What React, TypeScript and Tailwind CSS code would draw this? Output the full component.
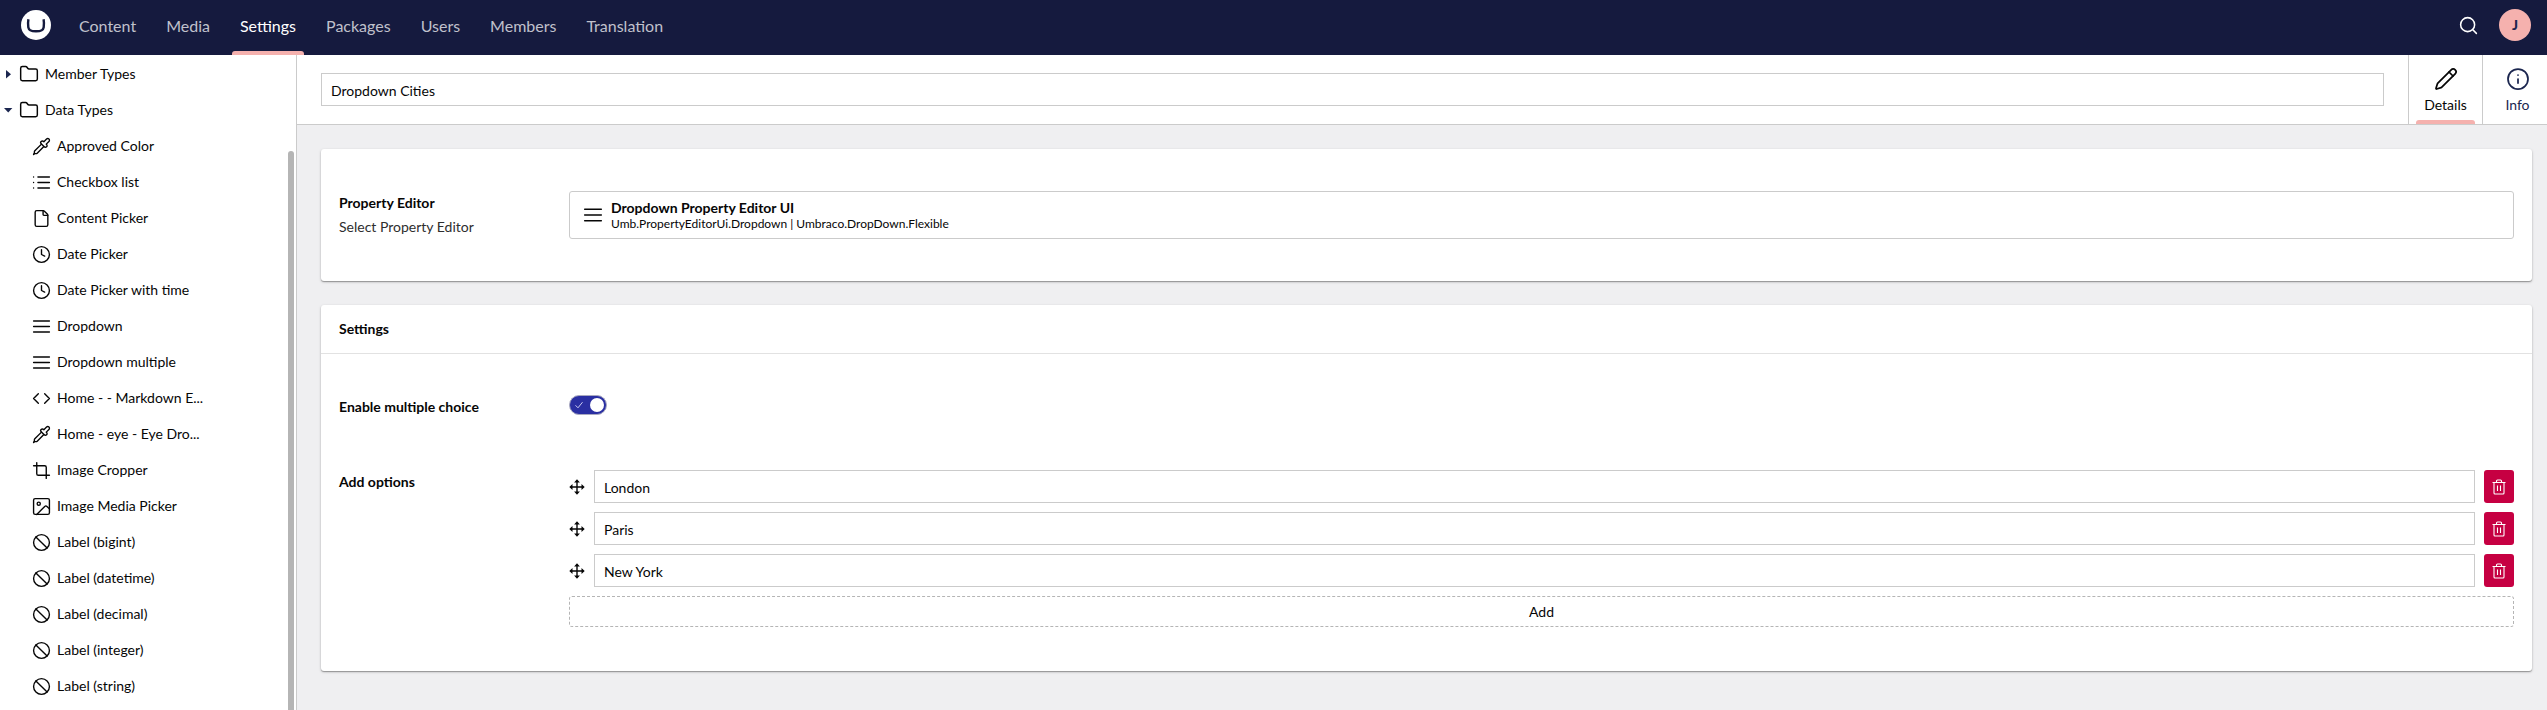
import { useState } from "react";
import type { ReactNode } from "react";
import { Ban, Clock, Crop, File, Folder, Info, Menu, Pencil, Pipette, Search } from "lucide-react";
import type { LucideIcon } from "lucide-react";

const sections = ["Content", "Media", "Settings", "Packages", "Users", "Members", "Translation"];

type DrawnIconProps = { size?: number; strokeWidth?: number };

function Drawn({ size = 19, strokeWidth = 2, children }: DrawnIconProps & { children: ReactNode }) {
  return (
    <svg
      width={size}
      height={size}
      viewBox="0 0 24 24"
      fill="none"
      stroke="currentColor"
      strokeWidth={strokeWidth}
      strokeLinecap="round"
      strokeLinejoin="round"
      aria-hidden="true"
    >
      {children}
    </svg>
  );
}

const CodeIcon = (props: DrawnIconProps) => (
  <Drawn {...props}>
    <path d="m16 18 6-6-6-6M8 6l-6 6 6 6" />
  </Drawn>
);

const PictureIcon = (props: DrawnIconProps) => (
  <Drawn {...props}>
    <rect x="2" y="2" width="20" height="20" rx="2" />
    <circle cx="8.5" cy="8.5" r="2" />
    <path d="m22 15-3.1-3.1a2 2 0 0 0-2.8 0L6 22" />
  </Drawn>
);

const LinesIcon = (props: DrawnIconProps) => (
  <Drawn {...props}>
    <path d="M2 5h20M2 12h20M2 19h20" />
  </Drawn>
);

const ListIcon = (props: DrawnIconProps) => (
  <Drawn {...props}>
    <path d="M7.5 5H22M7.5 12H22M7.5 19H22M2 5h.01M2 12h.01M2 19h.01" />
  </Drawn>
);

type TreeIcon = LucideIcon | typeof CodeIcon;

const dataTypes: { label: string; icon: TreeIcon }[] = [
  { label: "Approved Color", icon: Pipette },
  { label: "Checkbox list", icon: ListIcon },
  { label: "Content Picker", icon: File },
  { label: "Date Picker", icon: Clock },
  { label: "Date Picker with time", icon: Clock },
  { label: "Dropdown", icon: LinesIcon },
  { label: "Dropdown multiple", icon: LinesIcon },
  { label: "Home - - Markdown E...", icon: CodeIcon },
  { label: "Home - eye - Eye Dro...", icon: Pipette },
  { label: "Image Cropper", icon: Crop },
  { label: "Image Media Picker", icon: PictureIcon },
  { label: "Label (bigint)", icon: Ban },
  { label: "Label (datetime)", icon: Ban },
  { label: "Label (decimal)", icon: Ban },
  { label: "Label (integer)", icon: Ban },
  { label: "Label (string)", icon: Ban },
];

function Logo() {
  return (
    <svg width="30" height="30" viewBox="0 0 30 30" aria-hidden="true">
      <circle cx="15" cy="15" r="15" fill="#fff" />
      <path
        d="M7.4 9.3c-.5 3-.5 5.400-.1 8 .4 2.600 1.800 4 7.700 4s7.300-1.400 7.700-4c.4-2.600.4-5-.1-8"
        fill="none"
        stroke="#151a3e"
        strokeWidth="2.400"
      />
    </svg>
  );
}

function MoveIcon() {
  return (
    <svg width="16" height="16" viewBox="0 0 16 16" fill="currentColor" aria-hidden="true">
      <path d="M7.300 2h1.400v12H7.300z M2 7.300h12v1.400h-12z" />
      <path d="M8 .3 10.900 3.500H5.100z M8 15.700 5.100 12.500h5.800z M.3 8 3.500 5.100v5.800z M15.700 8l-3.200 2.900V5.100z" />
    </svg>
  );
}

function TrashIcon() {
  return (
    <svg
      width="16"
      height="16"
      viewBox="0 0 16 16"
      fill="none"
      stroke="currentColor"
      strokeWidth="1.1"
      strokeLinejoin="round"
      aria-hidden="true"
    >
      <path d="M1.500 3.500h13M5.500 3.500V2a1 1 0 0 1 1-1h3a1 1 0 0 1 1 1v1.500M3 3.500v10.500c0 .6.4 1 1 1h8c.6 0 1-.4 1-1V3.500M6.500 6.500v5.500M9.500 6.500v5.500" />
    </svg>
  );
}

function Property({ label, description, children }: { label: string; description?: string; children: ReactNode }) {
  return (
    <div className="flex gap-[30px] py-6">
      <div className="w-[200px] shrink-0 leading-6">
        <div className="font-bold">{label}</div>
        {description && <div className="text-[#2e2e2e]">{description}</div>}
      </div>
      <div className="min-w-0 flex-1">{children}</div>
    </div>
  );
}

const card = "rounded-[3px] bg-white shadow-[0_1px_3px_rgba(0,0,0,0.2),0_1px_1px_rgba(0,0,0,0.28)]";
const textBox = "h-[33px] min-w-0 flex-1 border border-[#cbcbcb] bg-white px-[9px] pt-[2px] outline-none";

export default function App() {
  const [name, setName] = useState("Dropdown Cities");
  const [multiple, setMultiple] = useState(true);
  const [options, setOptions] = useState(["London", "Paris", "New York"]);

  return (
    <div className="flex h-screen flex-col overflow-hidden bg-[#efeff1] font-[Lato,sans-serif] text-sm text-[#060606]">
      <header className="flex h-[55px] shrink-0 items-center bg-[#151a3e] pr-4 pl-[21px]">
        <a href="#home" aria-label="Home" className="mr-5 pb-[5px]">
          <Logo />
        </a>
        <nav className="flex flex-1 gap-[14px] self-stretch text-base">
          {sections.map((s) => (
            <a
              key={s}
              href={`#${s.toLowerCase()}`}
              className={`relative flex items-center px-2 pb-1 ${s === "Settings" ? "text-white" : "text-[#c0c1cc]"}`}
            >
              {s}
              {s === "Settings" && <span className="absolute inset-x-0 bottom-0 h-1 rounded-t-[3px] bg-[#f5b1ae]" />}
            </a>
          ))}
        </nav>
        <div className="flex items-center gap-5 pb-[5px]">
          <button type="button" aria-label="Search" className="text-white">
            <Search size={21} strokeWidth={1.75} />
          </button>
          <button type="button" className="size-8 rounded-full bg-[#f5b1ae] text-sm font-black text-[#1b264f]">
            J
          </button>
        </div>
      </header>

      <div className="flex min-h-0 flex-1">
        <aside className="relative w-[297px] shrink-0 overflow-hidden border-r border-[#cbcbcb] bg-white pt-px">
          <ul>
            <li>
              <a href="#member-types" className="flex h-9 items-center pl-1">
                <svg width="9" height="9" viewBox="0 0 9 9" className="mr-[6px]" aria-hidden="true">
                  <path d="M2 0v8.4L7 4.2z" fill="#1b264f" />
                </svg>
                <Folder size={20} strokeWidth={1.75} />
                <span className="ml-[6px]">Member Types</span>
              </a>
            </li>
            <li>
              <a href="#data-types" className="flex h-9 items-center pl-1">
                <svg width="9" height="9" viewBox="0 0 9 9" className="mr-[6px]" aria-hidden="true">
                  <path d="M0 2h8.4L4.2 6.6z" fill="#1b264f" />
                </svg>
                <Folder size={20} strokeWidth={1.75} />
                <span className="ml-[6px]">Data Types</span>
              </a>
              <ul>
                {dataTypes.map(({ label, icon: Icon }) => (
                  <li key={label}>
                    <a href="#data-type" className="flex h-9 items-center gap-[6px] pl-8">
                      <Icon size={19} strokeWidth={1.75} />
                      <span>{label}</span>
                    </a>
                  </li>
                ))}
              </ul>
            </li>
          </ul>
          <div className="absolute top-24 right-[2px] -bottom-2 w-[6px] rounded-full bg-[#b5b5b5]" />
        </aside>

        <main className="min-w-0 flex-1">
          <div className="flex h-[70px] overflow-hidden border-b border-[#cbcbcb] bg-white">
            <div className="flex min-w-0 flex-1 items-start px-6 pt-[18px]">
              <input aria-label="Name" value={name} onChange={(e) => setName(e.target.value)} className={textBox} />
            </div>
            <button
              type="button"
              className="relative flex w-[74px] shrink-0 flex-col items-center gap-1 border-l border-[#cbcbcb] pt-3"
            >
              <Pencil size={24} strokeWidth={1.75} />
              <span className="leading-5">Details</span>
              <span className="absolute inset-x-[7px] bottom-0 h-1 rounded-t-[3px] bg-[#f5b1ae]" />
            </button>
            <div className="w-[65px] shrink-0 overflow-hidden">
              <button
                type="button"
                className="flex h-full w-[70px] flex-col items-center gap-1 border-l border-[#cbcbcb] pt-3 text-[#1b264f]"
              >
                <Info size={24} strokeWidth={1.75} />
                <span className="leading-5">Info</span>
              </button>
            </div>
          </div>

          <div className="flex flex-col gap-6 pt-6 pr-[15px] pl-6">
            <section className={`${card} p-[18px]`}>
              <Property label="Property Editor" description="Select Property Editor">
                <button
                  type="button"
                  className="flex h-12 w-full items-center gap-2 rounded-[3px] border border-[#cbcbcb] px-[13px] text-left"
                >
                  <LinesIcon size={20} strokeWidth={1.75} />
                  <span className="flex flex-col">
                    <span className="leading-[18px] font-bold">Dropdown Property Editor UI</span>
                    <span className="text-xs leading-[14px]">
                      Umb.PropertyEditorUi.Dropdown | Umbraco.DropDown.Flexible
                    </span>
                  </span>
                </button>
              </Property>
            </section>

            <section className={card}>
              <h2 className="flex h-[49px] items-center border-b border-[#e2e2e2] px-[18px] font-bold">Settings</h2>
              <div className="px-[18px] pt-[17px] pb-5">
                <Property label="Enable multiple choice">
                  <label className="relative flex h-[27px] w-[38px] items-start">
                    <input
                      type="checkbox"
                      role="switch"
                      aria-label="Enable multiple choice"
                      checked={multiple}
                      onChange={(e) => setMultiple(e.target.checked)}
                      className="peer h-5 w-[38px] appearance-none rounded-full border border-[#a9a9c0] bg-[#a5a5b0] checked:bg-[#2a2fa2]"
                    />
                    <span className="pointer-events-none absolute top-[3px] left-[3px] size-[14px] rounded-full bg-white peer-checked:left-[21px]" />
                    <svg
                      width="8"
                      height="8"
                      viewBox="0 0 8 8"
                      className="pointer-events-none absolute top-[6px] left-[6px]"
                      fill="none"
                      stroke="#c9caf0"
                      aria-hidden="true"
                    >
                      <path d="M.5 4.3 3 6.8 7.5 1.2" />
                    </svg>
                  </label>
                </Property>
                <Property label="Add options">
                  <ul className="flex flex-col gap-[9px]">
                    {options.map((o, i) => (
                      <li key={i} className="flex items-center gap-[9px]">
                        <MoveIcon />
                        <input
                          aria-label={`Option ${i + 1}`}
                          value={o}
                          onChange={(e) => setOptions(options.map((v, j) => (j === i ? e.target.value : v)))}
                          className={textBox}
                        />
                        <button
                          type="button"
                          aria-label="Remove"
                          onClick={() => setOptions(options.filter((_, j) => j !== i))}
                          className="flex h-[33px] w-[30px] items-center justify-center rounded-[3px] bg-[#c60042] text-white"
                        >
                          <TrashIcon />
                        </button>
                      </li>
                    ))}
                  </ul>
                  <button
                    type="button"
                    onClick={() => setOptions([...options, ""])}
                    className="mt-[9px] block h-[31px] w-full rounded-[3px] border border-dashed border-[#b5b5b5] text-center"
                  >
                    Add
                  </button>
                </Property>
              </div>
            </section>
          </div>
        </main>
      </div>
    </div>
  );
}
